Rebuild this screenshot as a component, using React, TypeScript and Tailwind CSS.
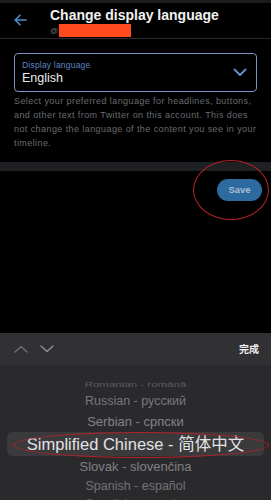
import React from "react";

export default function App() {
  return (
    <div className="relative w-[271px] h-[500px] bg-black flex flex-col overflow-hidden font-['Liberation_Sans',Arial,sans-serif]">
      <div className="h-[3px] bg-[#1c1c1e]" />
      {/* header */}
      <div className="h-[36px] flex items-start border-b border-[#26282b]">
        <div className="w-[50px] pl-[14px] pt-[11px]">
          <svg width="13" height="12" viewBox="0 0 13 12" fill="none" stroke="#4d8fd0" strokeWidth="1.6" strokeLinecap="round" strokeLinejoin="round">
            <path d="M12 6H1.5" />
            <path d="M6 1.2L1.2 6L6 10.8" />
          </svg>
        </div>
        <div className="flex flex-col pt-[5px]">
          <div className="text-[14px] leading-[15px] font-bold text-[#f2f2f2]">Change display language</div>
          <div className="flex items-center h-[13px] mt-[1px]">
            <span className="text-[8px] text-[#6b6f74] leading-none">@</span>
            <div className="ml-[1px] w-[72px] h-[13px] bg-[#ff4a1e]" />
          </div>
        </div>
      </div>

      {/* content */}
      <div className="px-[14px]">
        <div className="mt-[14px] h-[39px] border border-[#7d93c2] rounded-[4px] flex items-center justify-between pl-[7px] pr-[9px]">
          <div className="flex flex-col">
            <span className="text-[8.5px] leading-[10px] text-[#5e86c2] tracking-[0.2px]">Display language</span>
            <span className="text-[12.5px] leading-[15px] text-[#ececec] mt-[1px]">English</span>
          </div>
          <svg width="14" height="9" viewBox="0 0 14 9" fill="none" stroke="#5e93d8" strokeWidth="1.8" strokeLinecap="round" strokeLinejoin="round">
            <path d="M1.5 1.5L7 7L12.5 1.5" />
          </svg>
        </div>
        <p className="mt-[2px] text-[9px] leading-[14px] text-[#686c71] tracking-[0.42px] whitespace-nowrap">
          Select your preferred language for headlines, buttons,
          <br />
          and other text from Twitter on this account. This does
          <br />
          not change the language of the content you see in your
          <br />
          timeline.
        </p>
      </div>

      <div className="mt-[12px] h-[9px] bg-[#1f2023]" />

      <div className="flex justify-end pr-[9px] mt-[8px]">
        <div className="w-[45px] h-[22px] rounded-full bg-[#2c6aa0] flex items-center justify-center">
          <span className="text-[9.5px] font-bold text-[#a9bfd5]">Save</span>
        </div>
      </div>

      <div className="flex-1" />

      {/* picker */}
      <div className="h-[167px] bg-[#2a2a2c] flex flex-col">
        <div className="h-[36px] bg-[#313133] flex items-center justify-between pl-[14px] pr-[12px]">
          <div className="flex items-center gap-[12px]">
            <svg width="14" height="8" viewBox="0 0 14 8" fill="none" stroke="#6e6e72" strokeWidth="1.6" strokeLinecap="round" strokeLinejoin="round">
              <path d="M1 7L7 1.5L13 7" />
            </svg>
            <svg width="14" height="8" viewBox="0 0 14 8" fill="none" stroke="#8a8a8e" strokeWidth="1.6" strokeLinecap="round" strokeLinejoin="round">
              <path d="M1 1L7 6.5L13 1" />
            </svg>
          </div>
          <span className="text-[10px] font-bold text-[#ececec] font-['Noto_Sans_CJK_SC',sans-serif]">完成</span>
        </div>
        <div className="flex flex-col items-center px-[7px] overflow-hidden">
          <div className="mt-[12px] h-[16px] flex items-center text-[11.5px] text-[#5c5c60] scale-y-[0.7]">Romanian - română</div>
          <div className="h-[17px] flex items-center text-[12.5px] text-[#77777b]">Russian - русский</div>
          <div className="mt-[2px] h-[20px] flex items-center text-[13px] text-[#828286]">Serbian - српски</div>
          <div className="mt-[1px] h-[24px] w-full rounded-[5px] bg-[#3a3a3d] flex items-center justify-center text-[16.5px] text-[#e2e2e4] font-['Liberation_Sans','Noto_Sans_CJK_SC',sans-serif]">
            Simplified Chinese - 简体中文
          </div>
          <div className="mt-[1px] h-[21px] flex items-center text-[13px] text-[#808084]">Slovak - slovenčina</div>
          <div className="h-[20px] flex items-center text-[12.5px] text-[#727276]">Spanish - español</div>
          <div className="h-[20px] flex items-center text-[12px] text-[#5c5c60]">Swedish - svenska</div>
        </div>
      </div>

      {/* annotation ellipses */}
      <div className="absolute left-[193px] top-[160px] w-[76px] h-[60px] rounded-[50%] border-[1.5px] border-[#b3222a]" />
      <div className="absolute left-[13px] top-[432px] w-[256px] h-[26px] rounded-[50%] border-[1.5px] border-[#b3222a]" />
    </div>
  );
}
